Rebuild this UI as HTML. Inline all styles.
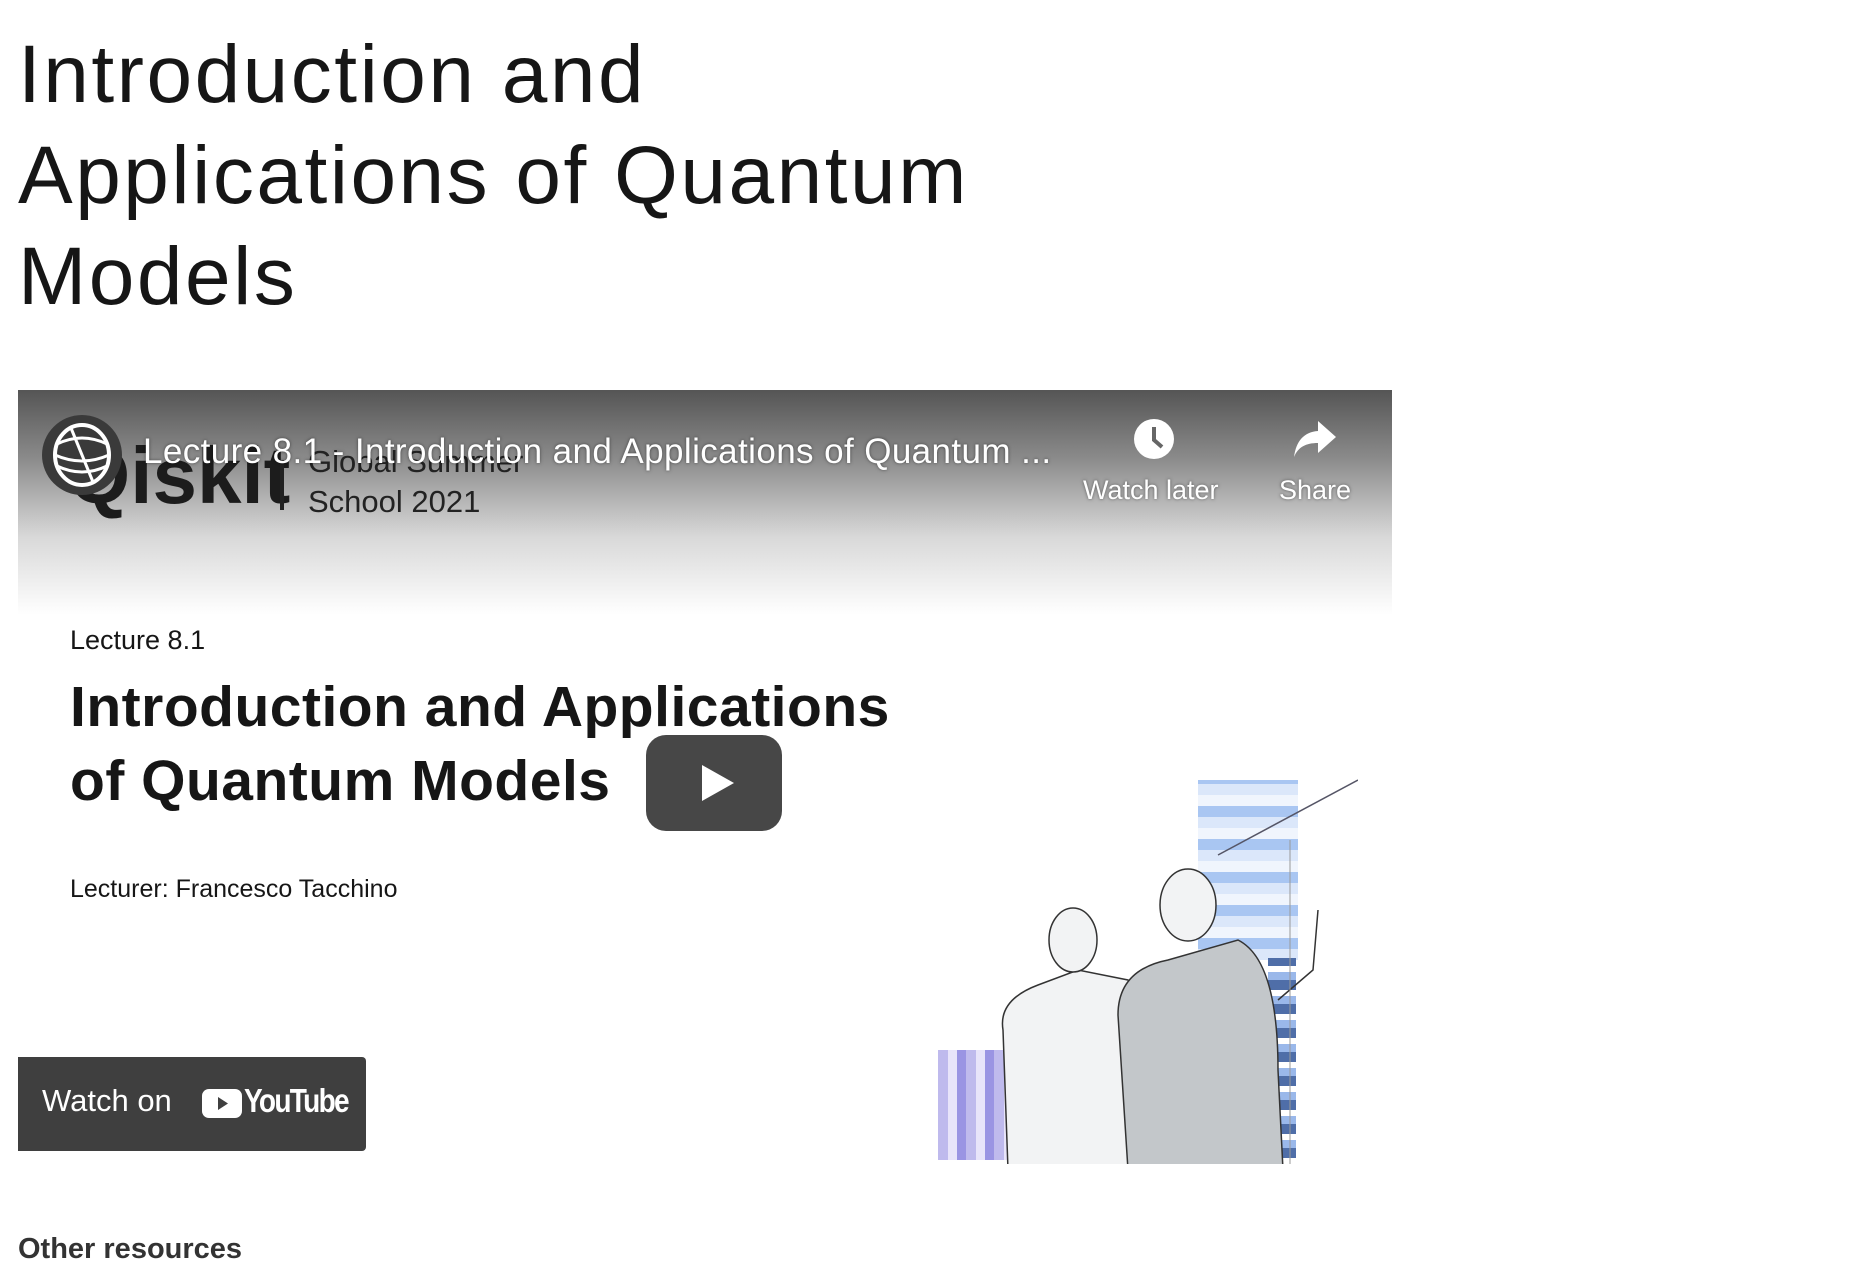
<!DOCTYPE html>
<html><head><meta charset="utf-8"><style>
html,body{margin:0;padding:0;background:#fff;width:1873px;height:1279px;overflow:hidden;font-family:"Liberation Sans",sans-serif}
h1{position:absolute;left:18px;top:24px;margin:0;font-weight:300;font-size:82px;line-height:101px;color:#161616;letter-spacing:2.5px;width:1200px}
.v{position:absolute;left:18px;top:390px;width:1374px;height:774px;background:#fff;overflow:hidden}
.grad{position:absolute;left:0;top:0;width:100%;height:225px;background:linear-gradient(#555 0%,#8a8a8a 30%,#d8d8d8 65%,rgba(255,255,255,0) 100%)}
.t{position:absolute;color:#fff;font-size:35px;text-shadow:0 0 3px rgba(0,0,0,.5);white-space:nowrap}
.s{position:absolute;color:#161616;white-space:nowrap}
.other{position:absolute;left:18px;top:1233px;font-size:29px;font-weight:bold;color:#333}
</style></head><body>
<h1>Introduction and<br>Applications of Quantum<br>Models</h1>
<div class="v">
 <div class="grad"></div>
 <div class="s" style="left:50px;top:40px;font-size:80px;font-weight:bold;color:#1c1c1c">Qiskit</div>
 <div style="position:absolute;left:262px;top:70px;width:4px;height:50px;background:#222"></div>
 <div class="s" style="left:290px;top:52px;font-size:31px;color:#222;line-height:40px">Global Summer<br>School 2021</div>
 <svg style="position:absolute;left:23px;top:24px" width="82" height="82" viewBox="0 0 82 82"><circle cx="41" cy="41" r="40" fill="#3a3a3a"/><ellipse cx="41" cy="41" rx="27" ry="30" fill="none" stroke="#fff" stroke-width="4"/><path d="M16 30 Q41 18 66 30 M14 41 Q41 53 68 41 M16 52 Q41 64 66 52 M30 14 L52 68" stroke="#fff" stroke-width="3" fill="none"/></svg>
 <div class="t" style="left:125px;top:42px;letter-spacing:0.4px">Lecture 8.1 - Introduction and Applications of Quantum ...</div>
 <svg style="position:absolute;left:1114px;top:27px" width="44" height="44"><circle cx="22" cy="22" r="20" fill="#fff"/><path d="M22 10 V23 L30 30" stroke="#666" stroke-width="4" fill="none"/></svg>
 <div class="t" style="left:1065px;top:85px;font-size:27px">Watch later</div>
 <svg style="position:absolute;left:1274px;top:29px" width="46" height="40"><path d="M26 2 L44 18 L26 34 V24 C14 24 6 28 2 38 C4 22 12 13 26 12 Z" fill="#fff"/></svg>
 <div class="t" style="left:1261px;top:85px;font-size:27px">Share</div>
 <div class="s" style="left:52px;top:235px;font-size:27px">Lecture 8.1</div>
 <div class="s" style="left:52px;top:280px;font-size:57px;font-weight:bold;line-height:74px;letter-spacing:0.5px">Introduction and Applications<br>of Quantum Models</div>
 <div class="s" style="left:52px;top:485px;font-size:25px">Lecturer: Francesco Tacchino</div>
 <div style="position:absolute;left:628px;top:345px;width:136px;height:96px;border-radius:20px;background:#3d3d3d;opacity:.95"></div>
 <svg style="position:absolute;left:628px;top:345px" width="136" height="96"><path d="M56 30 L56 66 L88 48 Z" fill="#fff"/></svg>
 <div style="position:absolute;left:920px;top:660px;width:70px;height:110px;background:repeating-linear-gradient(90deg,#b9b3ec 0 10px,#e6e2fa 10px 19px,#9089e0 19px 28px),#ddd;opacity:.9"></div>
 <div style="position:absolute;left:1180px;top:390px;width:100px;height:180px;background:repeating-linear-gradient(0deg,#dbe7fa 0 11px,#a9c6f2 11px 22px,#f0f5fd 22px 33px)"></div>
 <div style="position:absolute;left:1250px;top:568px;width:28px;height:200px;background:repeating-linear-gradient(0deg,#4f6ea8 0 10px,#9ab8ea 10px 18px,#fff 18px 24px)"></div>
 <div style="position:absolute;left:1110px;top:620px;width:40px;height:150px;background:repeating-linear-gradient(0deg,#3f5fb0 0 10px,#8aa8ea 10px 20px)"></div>
 <svg style="position:absolute;left:960px;top:380px" width="380" height="400"><g stroke="#333" stroke-width="1.5" fill="#f2f3f4">
 <path d="M30 400 L25 260 Q20 230 60 215 L100 200 L150 210 Q180 230 180 300 L185 400 Z"/>
 <ellipse cx="95" cy="170" rx="24" ry="32"/>
 <path d="M150 400 L140 245 Q140 200 190 190 L260 170 Q300 190 300 300 L305 400 Z" fill="#c3c7ca"/>
 <ellipse cx="210" cy="135" rx="28" ry="36"/>
 <path d="M300 230 L335 200 L340 140" fill="none"/>
 </g><path d="M240 85 L380 10" stroke="#556" stroke-width="1.5"/><path d="M312 70 V400" stroke="#999"/></svg>
 <div style="position:absolute;left:0;top:667px;width:348px;height:94px;background:#3f3f3f;border-radius:0 4px 4px 0"></div>
 <div class="s" style="left:24px;top:693px;font-size:31px;color:#fff">Watch on</div>
 <div style="position:absolute;left:184px;top:699px;width:40px;height:29px;border-radius:7px;background:#fff"></div>
 <svg style="position:absolute;left:184px;top:699px" width="40" height="29"><path d="M16 8 L16 21 L26 14.5Z" fill="#3f3f3f"/></svg>
 <div class="s" style="left:226px;top:692px;font-size:33px;color:#fff;font-weight:bold;letter-spacing:-2px;transform:scaleX(.85);transform-origin:left">YouTube</div>
</div>
<div class="other">Other resources</div>
</body></html>
